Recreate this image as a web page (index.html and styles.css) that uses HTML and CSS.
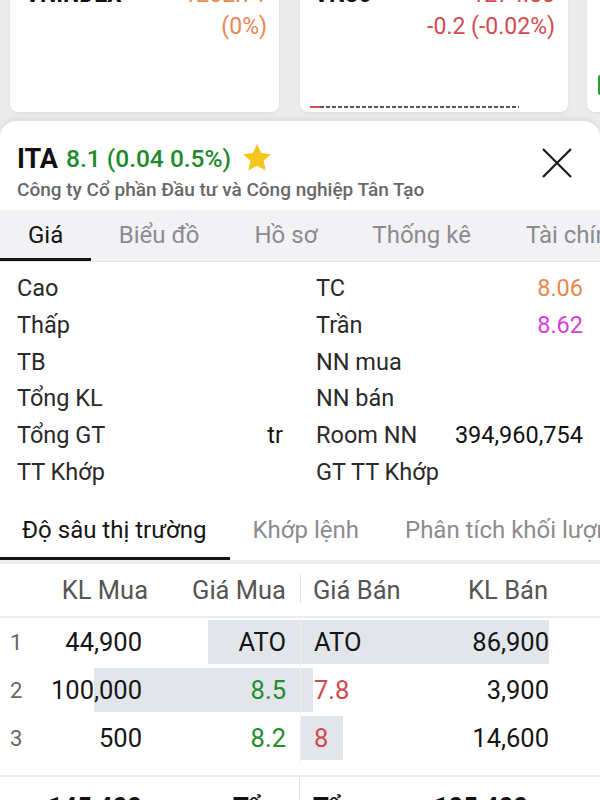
FILE: index.html
```html
<!DOCTYPE html>
<html lang="vi">
<head>
<meta charset="utf-8">
<title>ITA</title>
<link rel="stylesheet" href="styles.css">
</head>
<body>
<div class="top">
  <div class="card card-1">
    <div class="card-line1"><span class="idx-name">VNINDEX</span><span class="orange">1202.71</span></div>
    <div class="card-line2 orange">(0%)</div>
  </div>
  <div class="card card-2">
    <div class="card-line1"><span class="idx-name">VN30</span><span class="red">1274.88</span></div>
    <div class="card-line2 red">-0.2 (-0.02%)</div>
    <div class="spark"><span class="spark-red"></span><span class="spark-dash"></span></div>
  </div>
  <div class="card card-3"><span class="green-bar"></span></div>
</div>

<div class="sheet">
  <div class="sheet-head">
    <div class="head-text">
      <div class="title">
        <span class="ticker">ITA</span>
        <span class="price">8.1 (0.04 0.5%)</span>
        <svg class="star" width="34" height="34" viewBox="0 0 24 24"><path d="M12 2.2l2.95 6.3 6.85.8-5.1 4.7 1.4 6.8L12 17.4l-6.1 3.4 1.4-6.8-5.1-4.7 6.85-.8z" fill="#f4c51a"/></svg>
      </div>
      <div class="company">Công ty Cổ phần Đầu tư và Công nghiệp Tân Tạo</div>
    </div>
    <svg class="close" width="32" height="32" viewBox="0 0 32 32"><path d="M2 2L30 30M30 2L2 30" stroke="#1a1a1a" stroke-width="2.2" fill="none"/></svg>
  </div>

  <div class="tabs">
    <span class="tab active">Giá</span>
    <span class="tab">Biểu đồ</span>
    <span class="tab">Hồ sơ</span>
    <span class="tab">Thống kê</span>
    <span class="tab">Tài chính</span>
  </div>

  <div class="info">
    <div class="cell left"><span>Cao</span><span></span></div>
    <div class="cell right"><span>TC</span><span class="orange">8.06</span></div>
    <div class="cell left"><span>Thấp</span><span></span></div>
    <div class="cell right"><span>Trần</span><span class="magenta">8.62</span></div>
    <div class="cell left"><span>TB</span><span></span></div>
    <div class="cell right"><span>NN mua</span><span></span></div>
    <div class="cell left"><span>Tổng KL</span><span></span></div>
    <div class="cell right"><span>NN bán</span><span></span></div>
    <div class="cell left"><span>Tổng GT</span><span class="dark">tr</span></div>
    <div class="cell right"><span>Room NN</span><span class="dark">394,960,754</span></div>
    <div class="cell left"><span>TT Khớp</span><span></span></div>
    <div class="cell right"><span>GT TT Khớp</span><span></span></div>
  </div>

  <div class="subtabs">
    <span class="subtab active">Độ sâu thị trường</span>
    <span class="subtab">Khớp lệnh</span>
    <span class="subtab">Phân tích khối lượng</span>
  </div>

  <div class="book">
    <div class="book-head">
      <div class="buy">
        <span></span><span class="h-kl">KL Mua</span><span class="num">Giá Mua</span><span></span>
      </div>
      <div class="sell">
        <span></span><span>Giá Bán</span><span class="num">KL Bán</span><span></span>
      </div>
    </div>

    <div class="book-row">
      <div class="buy">
        <span class="bar" style="width:92px"></span>
        <span class="idx">1</span><span class="num">44,900</span><span class="num">ATO</span><span></span>
      </div>
      <div class="sell">
        <span class="bar" style="width:248px"></span>
        <span></span><span>ATO</span><span class="num">86,900</span><span></span>
      </div>
    </div>

    <div class="book-row">
      <div class="buy">
        <span class="bar" style="width:206px"></span>
        <span class="idx">2</span><span class="num">100,000</span><span class="num green">8.5</span><span></span>
      </div>
      <div class="sell">
        <span class="bar" style="width:12px"></span>
        <span></span><span class="red2">7.8</span><span class="num">3,900</span><span></span>
      </div>
    </div>

    <div class="book-row">
      <div class="buy">
        <span class="idx">3</span><span class="num">500</span><span class="num green">8.2</span><span></span>
      </div>
      <div class="sell">
        <span class="bar" style="width:42px"></span>
        <span></span><span class="red2">8</span><span class="num">14,600</span><span></span>
      </div>
    </div>

    <div class="book-foot">
      <div class="f-buy"><span class="num">145,400</span><span>Tổng</span></div>
      <div class="f-sell"><span>Tổng</span><span class="num">105,400</span></div>
    </div>
  </div>
</div>
</body>
</html>
```

FILE: styles.css
```css
* { box-sizing: border-box; margin: 0; padding: 0; }
html, body { width: 600px; height: 800px; overflow: hidden; }
body {
  font-family: Roboto, "Noto Sans", sans-serif;
  background: #ebebeb;
  color: #1c1c1c;
}

.orange { color: #e8884f; }
.red { color: #d24b4f; }
.red2 { color: #cc4a4d; }
.magenta { color: #d43fd6; }
.green { color: #238c2c; }
.dark { color: #111; }

/* top index cards */
.top {
  height: 121px;
  display: flex;
  padding-left: 10px;
  overflow: hidden;
}
.card {
  flex: none;
  margin-top: -40px;
  height: 152px;
  background: #fff;
  border-radius: 8px;
  box-shadow: 0 1px 3px rgba(0,0,0,0.07);
  display: flex;
  flex-direction: column;
}
.card-1 { width: 269px; margin-right: 21px; padding: 19px 12px 0 15px; }
.card-2 { width: 268px; margin-right: 19px; padding: 19px 13px 0 14px; }
.card-3 { width: 40px; }
.card-line1 {
  display: flex;
  justify-content: space-between;
  font-size: 23px;
  line-height: 32px;
}
.idx-name { font-weight: 700; color: #111; }
.card-line2 {
  text-align: right;
  font-size: 23px;
  line-height: 32px;
}
.spark {
  margin-top: auto;
  margin-bottom: 4px;
  margin-left: -4px;
  display: flex;
  height: 2px;
  width: 209px;
}
.spark-red { width: 10px; height: 2px; background: #d24b4f; }
.spark-dash {
  flex: 1;
  height: 2px;
  background: repeating-linear-gradient(90deg, #555 0 4px, transparent 4px 6px);
}
.green-bar {
  margin: 115px 0 0 11px;
  width: 4px;
  height: 20px;
  background: #2e9b3a;
  border-radius: 2px;
}

/* sheet */
.sheet {
  background: #fff;
  border-radius: 16px 16px 0 0;
  box-shadow: 0 -2px 6px rgba(0,0,0,0.08);
  height: 679px;
  overflow: hidden;
}
.sheet-head {
  display: flex;
  justify-content: space-between;
  padding: 22px 27px 8px 17px;
}
.title {
  display: flex;
  align-items: center;
  height: 31px;
}
.ticker { font-size: 27px; font-weight: 700; color: #111; margin-right: 8px; }
.price { font-size: 24.5px; font-weight: 500; color: #1e8a2c; margin-right: 9px; }
.star { margin-top: -2px; }
.company {
  margin-top: 4px;
  font-size: 19px;
  line-height: 24px;
  font-weight: 500;
  color: #686868;
}
.close { margin-top: 4px; }

.tabs {
  display: flex;
  height: 52px;
  background: #f2f2f4;
  border-bottom: 1px solid #e6e6e8;
  white-space: nowrap;
}
.tab {
  flex: none;
  padding: 0 27.5px;
  font-size: 24px;
  line-height: 50px;
  color: #8b8b90;
  border-bottom: 3px solid transparent;
}
.tab.active { color: #151515; border-bottom-color: #151515; padding-left: 28px; padding-right: 28px; }

.info {
  display: grid;
  grid-template-columns: 300px 300px;
  grid-auto-rows: 36.7px;
  padding-top: 8px;
}
.cell {
  display: flex;
  justify-content: space-between;
  align-items: center;
  font-size: 23.5px;
  color: #2a2a2a;
}
.cell.left { padding: 0 17px; }
.cell.right { padding: 0 17px 0 16px; }

.subtabs {
  display: flex;
  white-space: nowrap;
  padding-top: 24px;
  border-bottom: 4px solid #eeeeee;
}
.subtab {
  flex: none;
  padding: 0 23px 11px;
  font-size: 24px;
  line-height: 32px;
  color: #8b8b90;
  border-bottom: 3px solid transparent;
}
.subtab.active { color: #151515; border-bottom-color: #151515; padding-left: 22px; padding-right: 23px; }

/* order book */
.book { font-size: 25.5px; }
.book-head, .book-row, .book-foot { display: flex; }
.buy {
  position: relative;
  width: 300px;
  display: grid;
  grid-template-columns: 40px 102px 144px 14px;
  align-items: center;
}
.sell {
  position: relative;
  width: 300px;
  display: grid;
  grid-template-columns: 13px 117px 118px 52px;
  align-items: center;
}
.buy > span, .sell > span { position: relative; }
.num { text-align: right; }
.book-head {
  height: 54px;
  border-bottom: 2px solid #ececec;
  color: #555;
}
.book-head .sell::before {
  content: "";
  position: absolute;
  left: 0;
  top: 11px;
  height: 28px;
  width: 1px;
  background: #dcdcdc;
}
.h-kl { text-align: right; margin-right: -6px; }
.book-row { height: 48px; color: #151515; }
.book-row .buy > .bar {
  position: absolute;
  right: 0;
  top: 2px;
  bottom: 2px;
  background: #e2e5ea;
}
.book-row .sell > .bar {
  position: absolute;
  left: 0;
  top: 2px;
  bottom: 2px;
  background: #e2e5ea;
}
.book-row .sell { border-left: 1px solid #efefef; }
.idx { color: #666; font-size: 22px; padding-left: 10px; }

.book-foot {
  margin-top: 13px;
  border-top: 2px solid #ececec;
  height: 60px;
  font-weight: 700;
  color: #111;
}
.f-buy {
  width: 300px;
  display: grid;
  grid-template-columns: 142px 1fr;
  column-gap: 91px;
  padding-top: 15px;
  border-right: 1px solid #e2e2e2;
}
.f-sell {
  width: 300px;
  display: grid;
  grid-template-columns: 80px 135px;
  padding: 15px 0 0 13px;
}
```
